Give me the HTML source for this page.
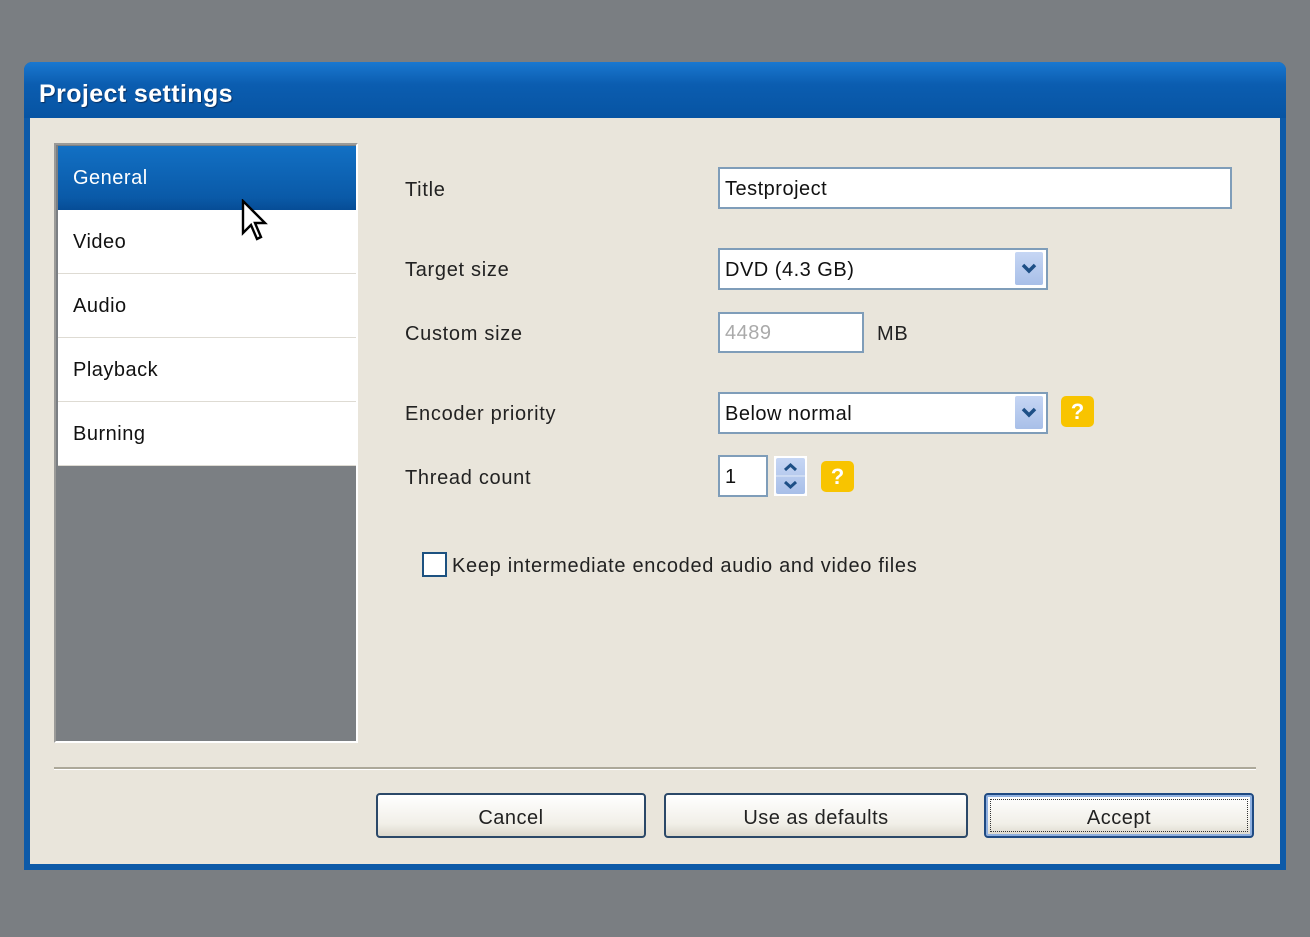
<!DOCTYPE html>
<html><head><style>
body{margin:0;width:1310px;height:937px;background:#7a7e82;position:relative;overflow:hidden;font-family:"Liberation Sans",sans-serif;}
.a{position:absolute;}
.win{left:24px;top:62px;width:1262px;height:808px;background:#0d5aa8;border-radius:8px 8px 0 0;}
.tb{left:24px;top:62px;width:1262px;height:56px;border-radius:8px 8px 0 0;background:linear-gradient(#1a78d0,#0b5db0 40%,#0754a3);}
.ttl{left:39px;top:80px;color:#fff;font-size:25px;font-weight:bold;letter-spacing:0.4px;text-shadow:1px 1px 1px #0a3060;}
.cl{left:30px;top:118px;width:1250px;height:746px;background:#e9e5db;}
.lp{left:54px;top:143px;width:300px;height:596px;border:2px solid #9a9a98;border-right-color:#fff;border-bottom-color:#fff;background:#7b7f83;}
.it{left:58px;width:298px;height:63px;background:#fff;border-bottom:1px solid #dedbd3;color:#111;font-size:20px;line-height:64px;text-indent:15px;letter-spacing:0.5px;}
.lbl{left:405px;font-size:20px;color:#222;letter-spacing:0.7px;}
.inp{background:#fff;border:2px solid #7f9db9;box-sizing:border-box;font-size:20px;color:#111;padding-left:5px;letter-spacing:0.5px;}
.dd{width:28px;height:33px;background:linear-gradient(#c6d6f4,#a8bfe8);border-radius:2px;}
.help{background:#f8c400;border-radius:5px;color:#fff;font-weight:bold;font-size:22px;text-align:center;}
.btn{height:45px;top:793px;box-sizing:border-box;border:2px solid #2b4868;border-radius:4px;background:linear-gradient(#fff,#f1efe8 70%,#dcd8cc);font-size:20px;color:#222;text-align:center;line-height:46px;letter-spacing:0.5px;}
</style></head><body>
<div class="a win"></div>
<div class="a tb"></div>
<div class="a ttl">Project settings</div>
<div class="a cl"></div>
<div class="a lp"></div>
<div class="a it" style="top:146px;background:linear-gradient(#1270c4,#0a5aa8 80%,#064d96);color:#fff;border:none;height:64px">General</div>
<div class="a it" style="top:210px">Video</div>
<div class="a it" style="top:274px">Audio</div>
<div class="a it" style="top:338px">Playback</div>
<div class="a it" style="top:402px">Burning</div>
<svg class="a" style="left:241px;top:199px" width="28" height="44" viewBox="0 0 14 22"><path d="M1 1 L1 17 L5 13 L8 20 L10 19 L7 12 L12 12 Z" fill="#fff" stroke="#000" stroke-width="1.2"/></svg>
<div class="a lbl" style="top:179px">Title</div>
<div class="a lbl" style="top:259px">Target size</div>
<div class="a lbl" style="top:323px">Custom size</div>
<div class="a lbl" style="top:403px">Encoder priority</div>
<div class="a lbl" style="top:467px">Thread count</div>
<div class="a inp" style="left:718px;top:167px;width:514px;height:42px;line-height:40px">Testproject</div>
<div class="a inp" style="left:718px;top:248px;width:330px;height:42px;line-height:40px">DVD (4.3 GB)</div>
<div class="a dd" style="left:1015px;top:252px"><svg width="28" height="33"><path d="M8 13 L14 19 L20 13" stroke="#1d4f86" stroke-width="3.5" fill="none"/></svg></div>
<div class="a inp" style="left:718px;top:312px;width:146px;height:41px;line-height:39px;color:#aaa">4489</div>
<div class="a lbl" style="left:877px;top:323px">MB</div>
<div class="a inp" style="left:718px;top:392px;width:330px;height:42px;line-height:40px">Below normal</div>
<div class="a dd" style="left:1015px;top:396px"><svg width="28" height="33"><path d="M8 13 L14 19 L20 13" stroke="#1d4f86" stroke-width="3.5" fill="none"/></svg></div>
<div class="a help" style="left:1061px;top:396px;width:33px;height:31px;line-height:31px">?</div>
<div class="a inp" style="left:718px;top:455px;width:50px;height:42px;line-height:40px">1</div>
<div class="a" style="left:774px;top:456px;width:33px;height:40px;background:#fff"></div>
<div class="a dd" style="left:776px;top:458px;width:29px;height:36px"><svg width="29" height="36"><path d="M9 12 L14.5 7 L20 12 M9 24 L14.5 29 L20 24" stroke="#1d4f86" stroke-width="3" fill="none"/><line x1="0" y1="18" x2="29" y2="18" stroke="#e4ecf8"/></svg></div>
<div class="a help" style="left:821px;top:461px;width:33px;height:31px;line-height:31px">?</div>
<div class="a" style="left:422px;top:552px;width:21px;height:21px;border:2px solid #1c5180;background:#fff"></div>
<div class="a lbl" style="left:452px;top:555px">Keep intermediate encoded audio and video files</div>
<div class="a" style="left:54px;top:767px;width:1202px;height:2px;background:#aca899;border-bottom:1px solid #fff"></div>
<div class="a btn" style="left:376px;width:270px">Cancel</div>
<div class="a btn" style="left:664px;width:304px">Use as defaults</div>
<div class="a btn" style="left:984px;width:270px;border-color:#1f4a82;box-shadow:inset 0 0 0 2px #8fb0e0">Accept<div class="a" style="left:4px;top:4px;right:4px;bottom:4px;border:1px dotted #333"></div></div>
</body></html>
